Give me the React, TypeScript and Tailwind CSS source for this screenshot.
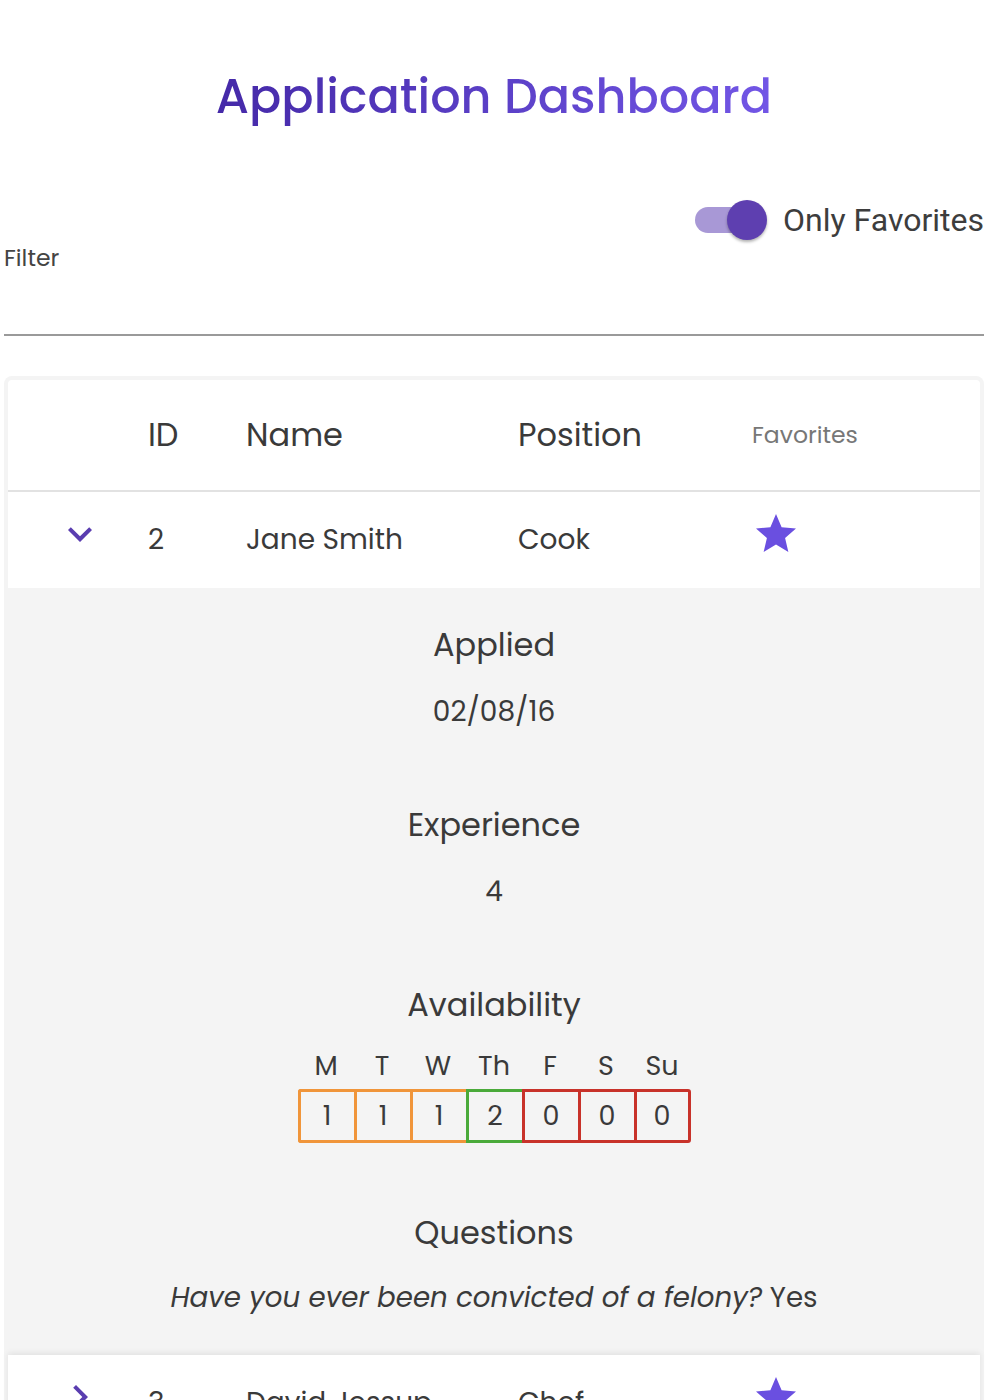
import React from "react"

const FONT = "font-['Poppins','Open_Sans',sans-serif]"

type Applicant = {
  id: number
  name: string
  position: string
  applied: string
  experience: number
  availability: number[]
  question: string
  answer: string
  favorite: boolean
}

const applicants: Applicant[] = [
  {
    id: 2,
    name: "Jane Smith",
    position: "Cook",
    applied: "02/08/16",
    experience: 4,
    availability: [1, 1, 1, 2, 0, 0, 0],
    question: "Have you ever been convicted of a felony?",
    answer: "Yes",
    favorite: true,
  },
  {
    id: 3,
    name: "David Jessup",
    position: "Chef",
    applied: "03/08/16",
    experience: 2,
    availability: [2, 2, 2, 2, 2, 0, 0],
    question: "Are you authorized to work in the United States?",
    answer: "Yes",
    favorite: true,
  },
]

const DAYS = ["M", "T", "W", "Th", "F", "S", "Su"]

function Star() {
  return (
    <svg width="48" height="48" viewBox="0 0 24 24" className="block">
      <path
        fill="#6a4fe0"
        d="M12 17.27L18.18 21l-1.64-7.03L22 9.24l-7.19-.61L12 2 9.19 8.63 2 9.24l5.46 4.73L5.82 21z"
      />
    </svg>
  )
}

function Chevron({ open }: { open: boolean }) {
  return (
    <svg width="48" height="48" viewBox="0 0 24 24" className="block">
      <path
        fill="#5a3db0"
        d={
          open
            ? "M16.59 8.59L12 13.17 7.41 8.59 6 10l6 6 6-6z"
            : "M10 6L8.59 7.41 13.17 12l-4.58 4.59L10 18l6-6z"
        }
      />
    </svg>
  )
}

function cellBorder(v: number) {
  if (v >= 2) return "border-[#4aaa3a]"
  if (v === 1) return "border-[#f0953a]"
  return "border-[#c8322a]"
}

function Row({ a, shadow }: { a: Applicant; shadow?: boolean }) {
  return (
    <div
      className={`grid grid-cols-[140px_98px_272px_234px_1fr] items-center h-[96px] bg-white text-[28px] text-[#3a3a3a] ${
        shadow ? "shadow-[0_-2px_6px_rgba(0,0,0,0.08)]" : ""
      }`}
    >
      <div className="flex justify-center pl-[4px] -mt-[12px]">
        <Chevron open={!shadow} />
      </div>
      <div>{a.id}</div>
      <div>{a.name}</div>
      <div>{a.position}</div>
      <div className="-mt-[12px]">{a.favorite && <Star />}</div>
    </div>
  )
}

function Details({ a }: { a: Applicant }) {
  return (
    <div className="flex flex-col items-center pt-[37px] pb-[37px] text-[#3a3a3a]">
      <div className="text-[32px] leading-[40px]">Applied</div>
      <div className="mt-[27px] text-[28px] leading-[40px]">{a.applied}</div>
      <div className="mt-[73px] text-[32px] leading-[40px]">Experience</div>
      <div className="mt-[27px] text-[28px] leading-[40px]">{a.experience}</div>
      <div className="mt-[73px] text-[32px] leading-[40px]">Availability</div>
      <div className="mt-[24px] flex">
        {DAYS.map((d) => (
          <div key={d} className="w-[56px] text-center text-[27px] leading-[34px]">
            {d}
          </div>
        ))}
      </div>
      <div className="mt-[6px] flex">
        {a.availability.map((v, i) => (
          <div
            key={i}
            className={`w-[56px] h-[54px] flex items-center justify-center text-[27px] border-y-[3px] border-l-[3px] ${cellBorder(
              v
            )} ${i === 0 ? "rounded-l-[3px]" : ""} ${
              i === a.availability.length - 1 ? "border-r-[3px] rounded-r-[3px] w-[57px]" : ""
            }`}
          >
            {v}
          </div>
        ))}
      </div>
      <div className="mt-[70px] text-[32px] leading-[40px]">Questions</div>
      <div className="mt-[25px] text-[27.7px] leading-[40px]">
        <span className="italic">{a.question}</span> {a.answer}
      </div>
    </div>
  )
}

export default function App() {
  const [onlyFav, setOnlyFav] = React.useState(true)
  return (
    <div className={`${FONT} w-[992px] h-[1400px] overflow-hidden bg-white pl-1 pr-2`}>
      <h1 className="pt-[68px] text-center text-[47.7px] leading-[58px] font-medium">
        <span className="bg-gradient-to-r from-[#4529a8] to-[#7256e6] bg-clip-text text-transparent">
          Application Dashboard
        </span>
      </h1>

      {/* favorites toggle */}
      <div className="mt-[74px] flex justify-end items-center h-[40px]">
        <button
          onClick={() => setOnlyFav(!onlyFav)}
          className="relative w-[72px] h-[40px] flex items-center"
        >
          <span className="block w-[64px] h-[26px] rounded-full bg-[#a898d6]" />
          <span
            className={`absolute top-0 w-[40px] h-[40px] rounded-full bg-[#5e3fb0] shadow-[0_2px_3px_rgba(0,0,0,0.3)] ${
              onlyFav ? "left-[32px]" : "left-0"
            }`}
          />
        </button>
        <span className="ml-[16px] font-['Roboto',sans-serif] text-[32px] text-[#3d3d3d] leading-[40px]">
          Only Favorites
        </span>
      </div>

      {/* filter */}
      <div className="mt-[6px]">
        <label className="block text-[23.5px] leading-[24px] text-[#444]">Filter</label>
        <input
          className="block w-full h-[66px] border-b-2 border-[#9a9a9a] outline-none bg-transparent text-[24px]"
          aria-label="Filter"
        />
      </div>

      {/* table */}
      <div className="mt-[40px] bg-[#f4f4f4] rounded-t-[8px] px-1 pt-[4px]">
        <div className="grid grid-cols-[140px_98px_272px_234px_1fr] items-center h-[112px] bg-white border-b-2 border-[#e2e2e2] text-[#3a3a3a] rounded-t-[4px]">
          <div />
          <div className="text-[32px]">ID</div>
          <div className="text-[32px]">Name</div>
          <div className="text-[32px]">Position</div>
          <div className="text-[23.5px] text-[#777]">Favorites</div>
        </div>
        <Row a={applicants[0]} />
        <Details a={applicants[0]} />
        <Row a={applicants[1]} shadow />
      </div>
    </div>
  )
}
